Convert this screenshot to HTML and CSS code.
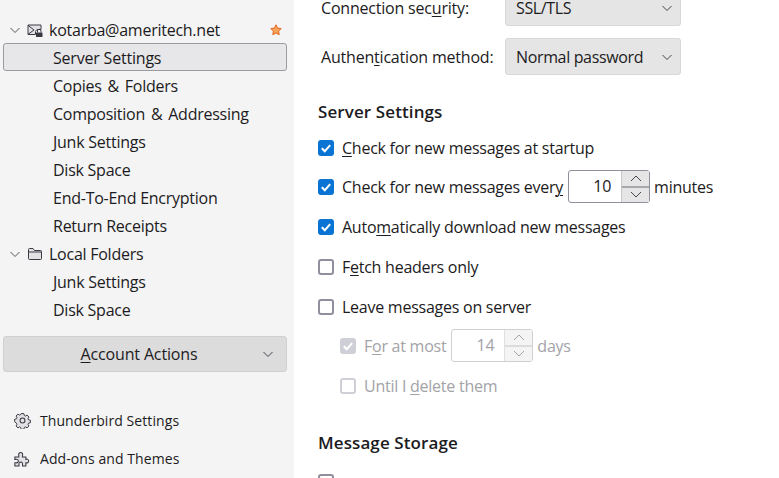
FILE: index.html
```html
<!DOCTYPE html>
<html lang="en">
<head>
<meta charset="utf-8">
<title>Account Settings</title>
<link rel="stylesheet" href="styles.css">
</head>
<body>
<div class="app">
  <aside class="sidebar">
    <ul class="tree">
      <li class="row account">
        <svg class="twisty" viewBox="0 0 12 12"><path d="M1.500 4l4.500 4.500L10.500 4"/></svg>
        <svg class="node-icon" viewBox="0 0 16 16"><path class="soft" d="M8.500 12.500H1V3h13v4.500H11a3 3 0 0 0-2.500 2z"/><path d="M1 3.300l6 4.700-6 4.300"/><rect class="solid" x="9" y="10.500" width="6.500" height="4.500" rx=".5"/><path d="M10.500 10.500V9a1.700 1.700 0 0 1 3.500 0v1.500"/></svg>
        <span class="grow">kotarba@ameritech.net</span>
        <svg class="star" viewBox="0 0 12 12"><path d="M6 .8l1.600 3.300 3.600.5-2.600 2.500.6 3.600L6 9l-3.200 1.700.6-3.600L.8 4.600l3.600-.5z"/></svg>
      </li>
      <li class="row sub selected">Server Settings</li>
      <li class="row sub amp">Copies &amp; Folders</li>
      <li class="row sub amp">Composition &amp; Addressing</li>
      <li class="row sub">Junk Settings</li>
      <li class="row sub">Disk Space</li>
      <li class="row sub">End-To-End Encryption</li>
      <li class="row sub">Return Receipts</li>
      <li class="row account">
        <svg class="twisty" viewBox="0 0 12 12"><path d="M1.500 4l4.500 4.500L10.500 4"/></svg>
        <svg class="node-icon" viewBox="0 0 16 16"><path class="soft" d="M1.500 12.500v-9a1 1 0 0 1 1-1h3.500l1.500 2h6a1 1 0 0 1 1 1v7a1 1 0 0 1-1 1h-11a1 1 0 0 1-1-1z"/><path d="M1.500 6h13"/></svg>
        <span class="grow">Local Folders</span>
      </li>
      <li class="row sub">Junk Settings</li>
      <li class="row sub">Disk Space</li>
    </ul>
    <button class="actions"><span class="actions-label"><u>A</u>ccount Actions</span><svg class="chev" viewBox="0 0 12 12"><path d="M1.500 4l4.500 4.500L10.500 4"/></svg></button>
    <nav class="links">
      <a class="link">
        <svg class="link-icon" viewBox="0 0 16 16"><path class="soft" d="M6.600 1h2.800l.4 1.900 1.200.6 1.700-1 1.900 1.900-1 1.700.6 1.200 1.800.4v2.600l-1.800.4-.6 1.200 1 1.700-1.900 1.900-1.700-1-1.200.6-.4 1.900H6.600l-.4-1.900-1.200-.6-1.700 1-1.900-1.900 1-1.700-.6-1.200L0 9.300V6.700l1.800-.4.600-1.200-1-1.700 1.900-1.900 1.700 1 1.200-.6z" transform="translate(.6 .6) scale(.925)"/><circle cx="8" cy="8" r="2.300"/></svg>
        Thunderbird Settings
      </a>
      <a class="link">
        <svg class="link-icon" viewBox="0 0 16 16"><path class="soft" d="M.8 6.500h3.700V5a1.900 1.900 0 1 1 3.500 0v1.500h3.200v2.300a1.800 1.800 0 1 1 0 3.200V15H8v-1.500a1.700 1.700 0 1 0-3.300 0V15H.8v-3h1a1.700 1.700 0 1 0 0-3.200h-1z"/></svg>
        Add-ons and Themes
      </a>
    </nav>
  </aside>
  <main class="content">
    <div class="field">
      <label class="field-label">Connection sec<u>u</u>rity:</label>
      <div class="select"><span>SSL/TLS</span><svg class="chev" viewBox="0 0 12 12"><path d="M1.500 4l4.500 4.500L10.500 4"/></svg></div>
    </div>
    <div class="field">
      <label class="field-label">Authen<u>t</u>ication method:</label>
      <div class="select"><span>Normal password</span><svg class="chev" viewBox="0 0 12 12"><path d="M1.500 4l4.500 4.500L10.500 4"/></svg></div>
    </div>
    <h2 class="heading first">Server Settings</h2>
    <div class="check-row r1"><span class="box on"><svg viewBox="0 0 16 16"><path d="M3.800 8.200l3 3 5.400-6"/></svg></span><span><u>C</u>heck for new messages at startup</span></div>
    <div class="check-row r2"><span class="box on"><svg viewBox="0 0 16 16"><path d="M3.800 8.200l3 3 5.400-6"/></svg></span><span>Check for new messages ever<u>y</u></span>
      <div class="spin"><span class="spin-val">10</span><div class="spin-btns"><span class="spin-btn"><svg viewBox="0 0 12 7"><path d="M1 6l5-5 5 5"/></svg></span><span class="spin-btn"><svg viewBox="0 0 12 7"><path d="M1 1l5 5 5-5"/></svg></span></div></div>
      <span>minutes</span></div>
    <div class="check-row r3"><span class="box on"><svg viewBox="0 0 16 16"><path d="M3.800 8.200l3 3 5.400-6"/></svg></span><span>Auto<u>m</u>atically download new messages</span></div>
    <div class="check-row r3"><span class="box"></span><span>F<u>e</u>tch headers only</span></div>
    <div class="check-row r3"><span class="box"></span><span>Leave messa<u>g</u>es on server</span></div>
    <div class="check-row r2 nested off"><span class="box on"><svg viewBox="0 0 16 16"><path d="M3.800 8.200l3 3 5.400-6"/></svg></span><span>F<u>o</u>r at most</span>
      <div class="spin"><span class="spin-val">14</span><div class="spin-btns"><span class="spin-btn"><svg viewBox="0 0 12 7"><path d="M1 6l5-5 5 5"/></svg></span><span class="spin-btn"><svg viewBox="0 0 12 7"><path d="M1 1l5 5 5-5"/></svg></span></div></div>
      <span>days</span></div>
    <div class="check-row r3 nested off"><span class="box"></span><span>Until I <u>d</u>elete them</span></div>
    <h2 class="heading second">Message Storage</h2>
    <div class="check-row last"><span class="box"></span><span class="last-label">Empty Trash on Exit</span></div>
  </main>
</div>
</body>
</html>
```
FILE: styles.css
```css
* { box-sizing: border-box; }
html, body { margin: 0; height: 100%; overflow: hidden; }
body {
  font-family: "Open Sans", "Noto Sans", sans-serif;
  font-size: 16px;
  color: #1c1b22;
  background: #fff;
}
u { text-underline-offset: 2px; text-decoration-thickness: 1px; }
.app { display: flex; height: 478px; overflow: hidden; }

.sidebar {
  width: 294px;
  flex: none;
  background: #f4f4f4;
  padding: 16px 7px 0 3px;
  display: flex;
  flex-direction: column;
}
.tree { list-style: none; margin: 0; padding: 0; }
.row {
  height: 28px;
  display: flex;
  align-items: center;
  white-space: nowrap;
  font-size: 16px;
  letter-spacing: -.25px;
}
.amp { word-spacing: 2px; }
.account { padding-left: 6px; padding-right: 5px; }
.sub { padding-left: 50px; }
.selected {
  background: #e7e7ea;
  border: 1px solid #9a9aa0;
  border-radius: 3px;
  padding: 2px 0 0 49px;
  margin-top: -1px;
  margin-bottom: 1px;
  letter-spacing: -.2px;
}
.twisty { width: 12px; height: 12px; flex: none; fill: none; stroke: #55555c; stroke-width: 1; }
.node-icon { width: 16px; height: 16px; flex: none; margin: 0 6px 0 6px; fill: none; stroke: #3a3a44; stroke-width: 1; }
.soft { fill: #e2e2e4; }
.solid { fill: #3a3a44; stroke: none; }
.grow { flex: 1; }
.star { width: 12px; height: 12px; fill: #f9a35a; stroke: #e2661c; stroke-width: 1; }

.actions {
  margin-top: 12px;
  height: 36px;
  width: 284px;
  flex: none;
  background: #dcdcdc;
  border: 1px solid #d0d0d4;
  border-radius: 3px;
  display: flex;
  align-items: center;
  padding: 0 12px 0 0;
  font: inherit;
  color: inherit;
  letter-spacing: -.15px;
}
.actions-label { flex: 1; text-align: center; padding-left: 12px; }
.chev { width: 12px; height: 12px; flex: none; fill: none; stroke: #44444c; stroke-width: 1; }

.links { margin-top: 37px; padding-left: 11px; display: flex; flex-direction: column; gap: 16px; }
.link { display: flex; align-items: center; height: 22px; font-size: 14px; gap: 9px; letter-spacing: .08px; }
.link-icon { width: 17px; height: 17px; flex: none; fill: none; stroke: #3a3a44; stroke-width: 1; }

.content { flex: 1; padding: 0 0 0 24px; margin-top: -11px; min-width: 0; }
.field { display: flex; align-items: center; height: 37px; margin-bottom: 12px; padding-left: 3px; }
.field-label { width: 184px; flex: none; letter-spacing: -.2px; }
.select {
  width: 176px;
  height: 37px;
  background: #e5e5e5;
  border: 1px solid #d8d8da;
  border-radius: 3px;
  display: flex;
  align-items: center;
  justify-content: space-between;
  padding: 0 7px 0 10px;
  letter-spacing: -.35px;
}
.heading { margin: 0; font-size: 17px; font-weight: 600; line-height: 24px; letter-spacing: .1px; }
.heading.first { margin-top: 25px; }
.heading.second { margin-top: 29px; }

.check-row { display: flex; align-items: center; gap: 8px; letter-spacing: -.25px; white-space: nowrap; }
.r1 { height: 33px; margin-top: 7px; }
.r2 { height: 33px; margin-top: 6px; }
.r3 { height: 33px; margin-top: 7px; }
.last { margin-top: 16px; height: 22px; }
.last-label { margin-top: 6px; }
.box {
  width: 16px;
  height: 16px;
  flex: none;
  border: 2px solid #8f8f9d;
  border-radius: 3px;
  background: #fff;
}
.box.on { background: #0a74d4; border-color: #0a74d4; position: relative; }
.box svg { position: absolute; left: -2px; top: -2px; width: 16px; height: 16px; fill: none; stroke: #fff; stroke-width: 2; }

.spin {
  display: flex;
  width: 82px;
  height: 33px;
  border: 1px solid #8f8f9d;
  border-radius: 3px;
  background: #fff;
  margin: 0 -4px 0 -3px;
}
.spin-val { flex: 1; text-align: right; padding-right: 10px; line-height: 31px; }
.spin-btns { width: 28px; display: flex; flex-direction: column; gap: 2px; background: #a8a8ac; border-left: 1px solid #c8c8cc; }
.spin-btn { flex: 1; background: #e5e5e5; display: flex; align-items: center; justify-content: center; }
.spin-btn svg { width: 12px; height: 7px; fill: none; stroke: #44444c; stroke-width: 1; }

.nested { padding-left: 22px; }
.off { color: #a3a3a8; }
.off .box { border-color: #cfcfd8; }
.off .box.on { background: #cfcfd8; border-color: #cfcfd8; }
.off .spin { border-color: #d0d0d4; margin-left: -3px; }
.off .spin-btns { background: #dcdcde; border-left-color: #e0e0e2; }
.off .spin-btn { background: #f4f4f4; }
.off .spin-btn svg { stroke: #a3a3a8; }
```
